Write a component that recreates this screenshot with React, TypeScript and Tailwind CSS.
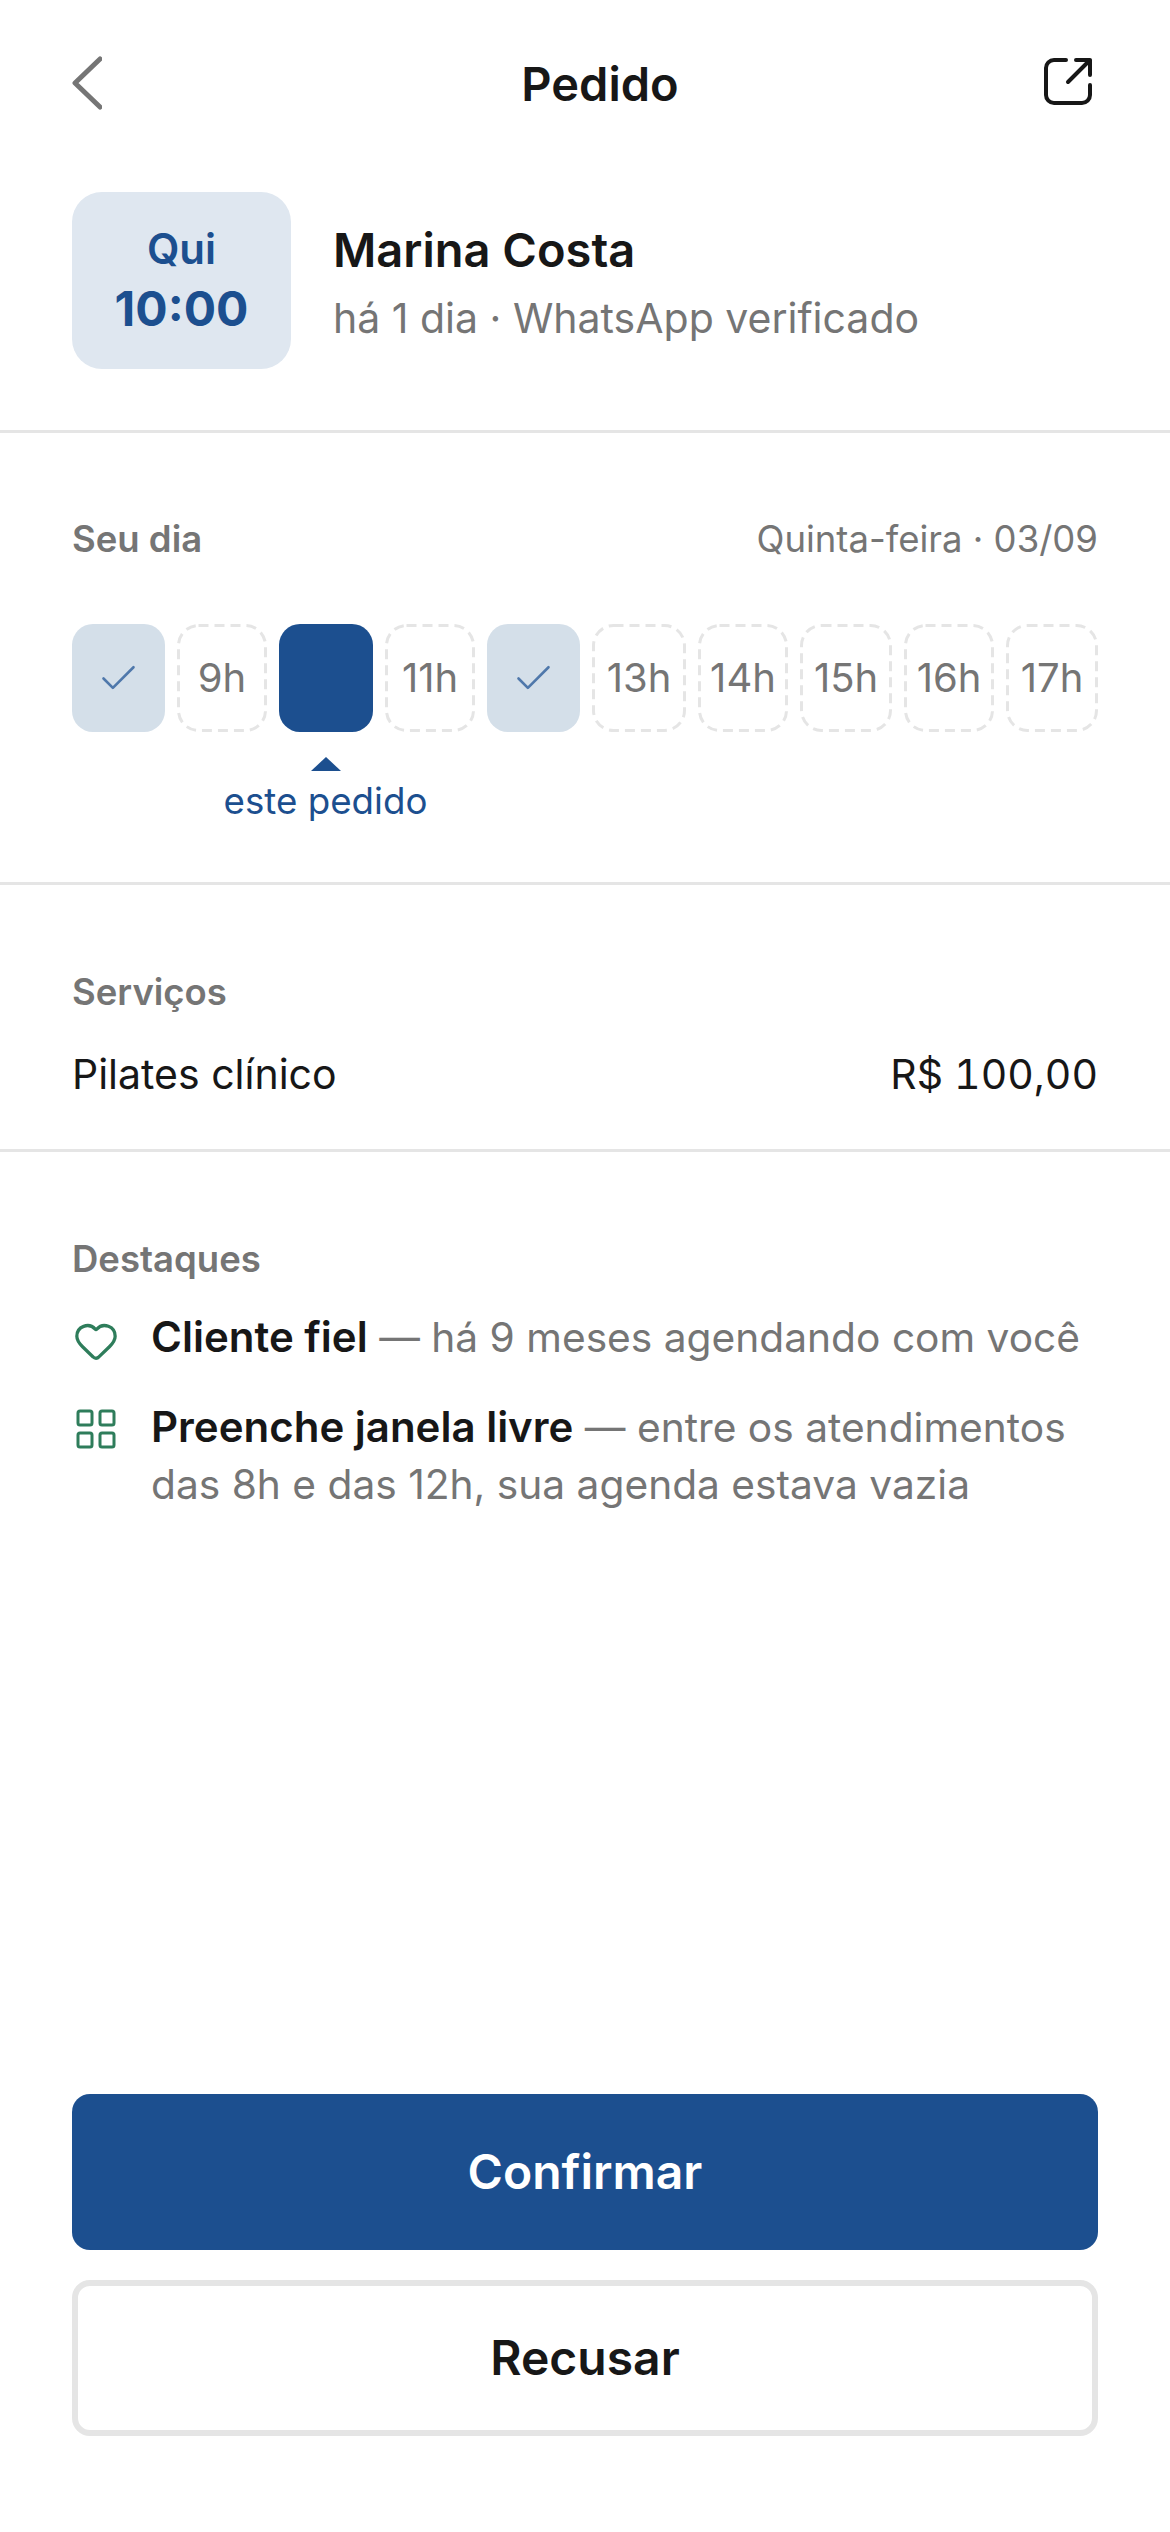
import React from 'react';
import { Check, Heart } from 'lucide-react';

type Slot = { label?: string; kind: 'booked' | 'free' | 'current'; width: string };

const slots: Slot[] = [
  { kind: 'booked', width: 'w-[93px]' },
  { label: '9h', kind: 'free', width: 'w-[90px]' },
  { kind: 'current', width: 'w-[94px]' },
  { label: '11h', kind: 'free', width: 'w-[90px]' },
  { kind: 'booked', width: 'w-[93px]' },
  { label: '13h', kind: 'free', width: 'w-[94px]' },
  { label: '14h', kind: 'free', width: 'w-[90px]' },
  { label: '15h', kind: 'free', width: 'w-[92px]' },
  { label: '16h', kind: 'free', width: 'w-[90px]' },
  { label: '17h', kind: 'free', width: 'w-[92px]' },
];

function SlotTile({ slot }: { slot: Slot }) {
  if (slot.kind === 'current') {
    return <div className={`${slot.width} h-[108px] rounded-[21px] bg-[#1c4f8f]`} />;
  }
  if (slot.kind === 'booked') {
    return (
      <div className={`${slot.width} h-[108px] rounded-[21px] bg-[#d4dfe9] flex items-center justify-center`}>
        <Check size={45} strokeWidth={1.4} className="text-[#4f78ab]" />
      </div>
    );
  }
  return (
    <div className={`${slot.width} relative h-[108px] flex items-center justify-center text-[40px] text-[#757575]`}>
      {/* dashes are longer than a css dashed border gives */}
      <svg className="absolute inset-0 w-full h-full" fill="none" stroke="#e5e5e5" strokeWidth="3" strokeDasharray="10 6">
        <rect x="1.5" y="1.5" rx="20" ry="20" className="w-[calc(100%-3px)] h-[calc(100%-3px)]" />
      </svg>
      {slot.label}
    </div>
  );
}

export default function App() {
  return (
    <div className="w-[1170px] h-[2532px] bg-white flex flex-col font-['Inter',sans-serif] text-[#171717]">
      {/* Header */}
      <div className="px-[72px] pt-[58px] grid grid-cols-[1fr_auto_1fr] items-center h-[110px]">
        <svg width="30" height="54" viewBox="0 0 30 54" fill="none" stroke="#757575" strokeWidth="5" strokeLinecap="round" strokeLinejoin="round" className="-mt-[2px]">
          <path d="M28 3 3 27l25 24" />
        </svg>
        <div className="text-[47px] leading-[52px] font-semibold pl-[30px]">Pedido</div>
        <svg width="50" height="50" viewBox="0 0 50 50" fill="none" stroke="#171717" strokeWidth="4" strokeLinecap="round" strokeLinejoin="round" className="justify-self-end mr-[5px] -mt-[4px]">
          <path d="M23 3H11a8 8 0 0 0-8 8v27a8 8 0 0 0 8 8h28a8 8 0 0 0 8-8V28" />
          <path d="M33 3h14v15M47 3 25 25" />
        </svg>
      </div>

      {/* Client */}
      <div className="px-[72px] pt-[82px] pb-[61px] flex items-center gap-[42px] border-b-[3px] border-[#e5e5e5]">
        <div className="w-[219px] h-[177px] rounded-[30px] bg-[#dfe7f0] flex flex-col items-center justify-center text-[#1c4f8f]">
          <div className="text-[42px] leading-[54px] font-semibold -mt-[1px]">Qui</div>
          <div className="text-[48px] leading-[58px] font-bold mt-[4px]">10:00</div>
        </div>
        <div>
          <div className="text-[47px] leading-[66px] font-semibold">Marina Costa</div>
          <div className="text-[41px] leading-[54px] text-[#757575] mt-[8px]">há 1 dia · WhatsApp verificado</div>
        </div>
      </div>

      {/* Day */}
      <div className="px-[72px] pt-[85px] h-[452px] border-b-[3px] border-[#e5e5e5]">
        <div className="flex items-center justify-between h-[42px] text-[#757575]">
          <div className="text-[36.5px] font-semibold">Seu dia</div>
          <div className="text-[36.5px]">Quinta-feira · 03/09</div>
        </div>
        <div className="flex gap-[12px] mt-[64px]">
          {slots.map((slot, i) => (
            <SlotTile key={i} slot={slot} />
          ))}
        </div>
        <div className="ml-[152px] w-[203px] mt-[25px] flex flex-col items-center text-[#1c4f8f]">
          <div className="w-0 h-0 border-x-[15px] border-x-transparent border-b-[14px] border-b-[#1c4f8f]" />
          <div className="text-[36.7px] leading-[48px] whitespace-nowrap mt-[6px]">este pedido</div>
        </div>
      </div>

      {/* Services */}
      <div className="px-[72px] pt-[86px] h-[267px] border-b-[3px] border-[#e5e5e5]">
        <div className="text-[36.5px] leading-[42px] font-semibold text-[#757575]">Serviços</div>
        <div className="flex items-center justify-between mt-[37px] text-[41px] leading-[48px]">
          <div>Pilates clínico</div>
          <div className="tabular-nums">R$ 100,00</div>
        </div>
      </div>

      {/* Highlights */}
      <div className="px-[72px] pt-[86px] flex-1">
        <div className="text-[36.5px] leading-[42px] font-semibold text-[#757575]">Destaques</div>
        <div className="flex gap-[32px] mt-[28px]">
          <Heart size={46} strokeWidth={1.7} className="text-[#2e7d5b] shrink-0 mt-[10px] ml-[1px]" />
          <div className="text-[40.7px] leading-[57px] text-[#757575] whitespace-nowrap">
            <span className="text-[42px] font-semibold text-[#171717]">Cliente fiel</span> — há 9 meses agendando com você
          </div>
        </div>
        <div className="flex gap-[35px] mt-[32px]">
          <svg width="40" height="40" viewBox="0 0 40 40" fill="none" stroke="#2e7d5b" strokeWidth="3" strokeLinejoin="round" className="shrink-0 mt-[11px] ml-[4px]">
            <rect x="2" y="2" width="14" height="14" rx="2" />
            <rect x="24" y="2" width="14" height="14" rx="2" />
            <rect x="2" y="24" width="14" height="14" rx="2" />
            <rect x="24" y="24" width="14" height="14" rx="2" />
          </svg>
          <div className="text-[40.7px] leading-[57px] text-[#757575]">
            <span className="text-[42px] font-semibold text-[#171717]">Preenche janela livre</span> — entre os atendimentos
            <br />
            das 8h e das 12h, sua agenda estava vazia
          </div>
        </div>
      </div>

      {/* Actions */}
      <div className="px-[72px] pb-[96px] flex flex-col gap-[30px]">
        <button className="h-[156px] rounded-[18px] bg-[#1c4f8f] text-white text-[48px] font-semibold">Confirmar</button>
        <button className="h-[156px] rounded-[18px] border-[6px] border-[#e5e5e5] bg-white text-[48px] font-semibold">Recusar</button>
      </div>
    </div>
  );
}
